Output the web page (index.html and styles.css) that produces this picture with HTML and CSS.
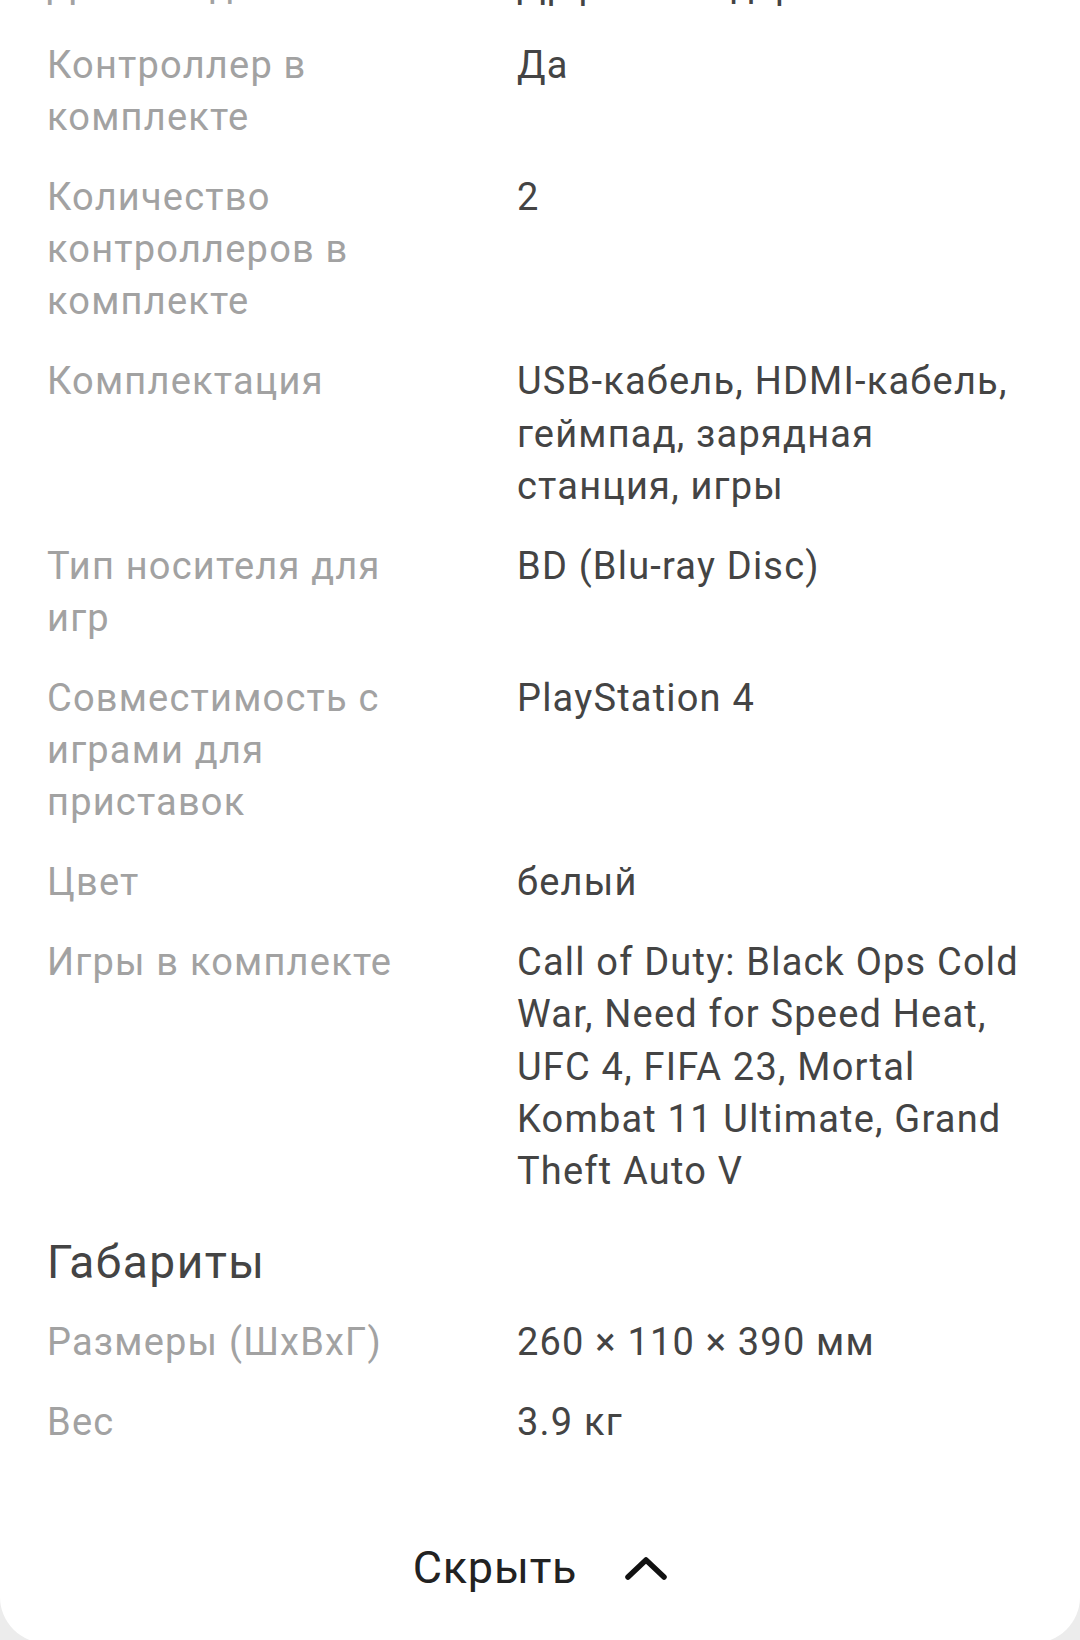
FILE: index.html
```html
<!DOCTYPE html>
<html lang="ru">
<head>
<meta charset="utf-8">
<link rel="stylesheet" href="styles.css">
</head>
<body>
<div class="card">
  <div class="specs">
    <div class="row cut">
      <div class="label">Дисковод</div>
      <div class="value">Дрфисковод ф</div>
    </div>
    <div class="row">
      <div class="label">Контроллер в комплекте</div>
      <div class="value">Да</div>
    </div>
    <div class="row">
      <div class="label">Количество контроллеров в комплекте</div>
      <div class="value">2</div>
    </div>
    <div class="row">
      <div class="label">Комплектация</div>
      <div class="value">USB-кабель, HDMI-кабель, геймпад, зарядная станция, игры</div>
    </div>
    <div class="row">
      <div class="label">Тип носителя для игр</div>
      <div class="value">BD (Blu-ray Disc)</div>
    </div>
    <div class="row">
      <div class="label">Совместимость с играми для приставок</div>
      <div class="value">PlayStation 4</div>
    </div>
    <div class="row">
      <div class="label">Цвет</div>
      <div class="value">белый</div>
    </div>
    <div class="row">
      <div class="label">Игры в комплекте</div>
      <div class="value">Call of Duty: Black Ops Cold War, Need for Speed Heat, UFC 4, FIFA 23, Mortal Kombat 11 Ultimate, Grand Theft Auto V</div>
    </div>
  </div>

  <h2 class="section-title">Габариты</h2>
  <div class="specs">
    <div class="row">
      <div class="label">Размеры (ШхВхГ)</div>
      <div class="value">260 × 110 × 390 мм</div>
    </div>
    <div class="row">
      <div class="label">Вес</div>
      <div class="value">3.9 кг</div>
    </div>
  </div>

  <button class="toggle" type="button">
    <span class="toggle-text">Скрыть</span>
    <svg class="chevron" width="42" height="24" viewBox="0 0 42 24" aria-hidden="true">
      <path d="M3 21 L21 4 L39 21" fill="none" stroke="#111" stroke-width="5.5" stroke-linecap="round" stroke-linejoin="round"/>
    </svg>
  </button>
</div>
</body>
</html>
```
FILE: styles.css
```css
* { box-sizing: border-box; }
html, body {
  margin: 0;
  padding: 0;
  background: #ececec;
}
body {
  width: 1080px;
  height: 1640px;
  overflow: hidden;
  font-family: Roboto, "Noto Sans", "Liberation Sans", sans-serif;
}
.card {
  background: #ffffff;
  height: 1643px;
  border-radius: 0 0 46px 46px;
  padding: 0 47px;
  overflow: hidden;
}
.specs {
  display: flex;
  flex-direction: column;
  gap: 27.5px;
}
.specs:first-child {
  margin-top: -41px;
}
.row {
  display: grid;
  grid-template-columns: 372px 1fr;
  column-gap: 98px;
  font-size: 38px;
  letter-spacing: 1.2px;
  line-height: 52.3px;
}
.label {
  color: #a2a2a2;
}
.value {
  color: #444444;
}
.section-title {
  margin: 35px 0 24px;
  font-size: 46px;
  letter-spacing: 1.5px;
  line-height: 60px;
  font-weight: 400;
  color: #444444;
}
.toggle {
  display: flex;
  align-items: center;
  justify-content: center;
  gap: 48px;
  width: 100%;
  margin: 93px 0 0;
  padding: 0;
  border: 0;
  background: transparent;
  font-family: inherit;
  cursor: pointer;
}
.toggle-text {
  font-size: 45px;
  letter-spacing: 0.8px;
  line-height: 52px;
  color: #222222;
}
.chevron {
  display: block;
}
```
